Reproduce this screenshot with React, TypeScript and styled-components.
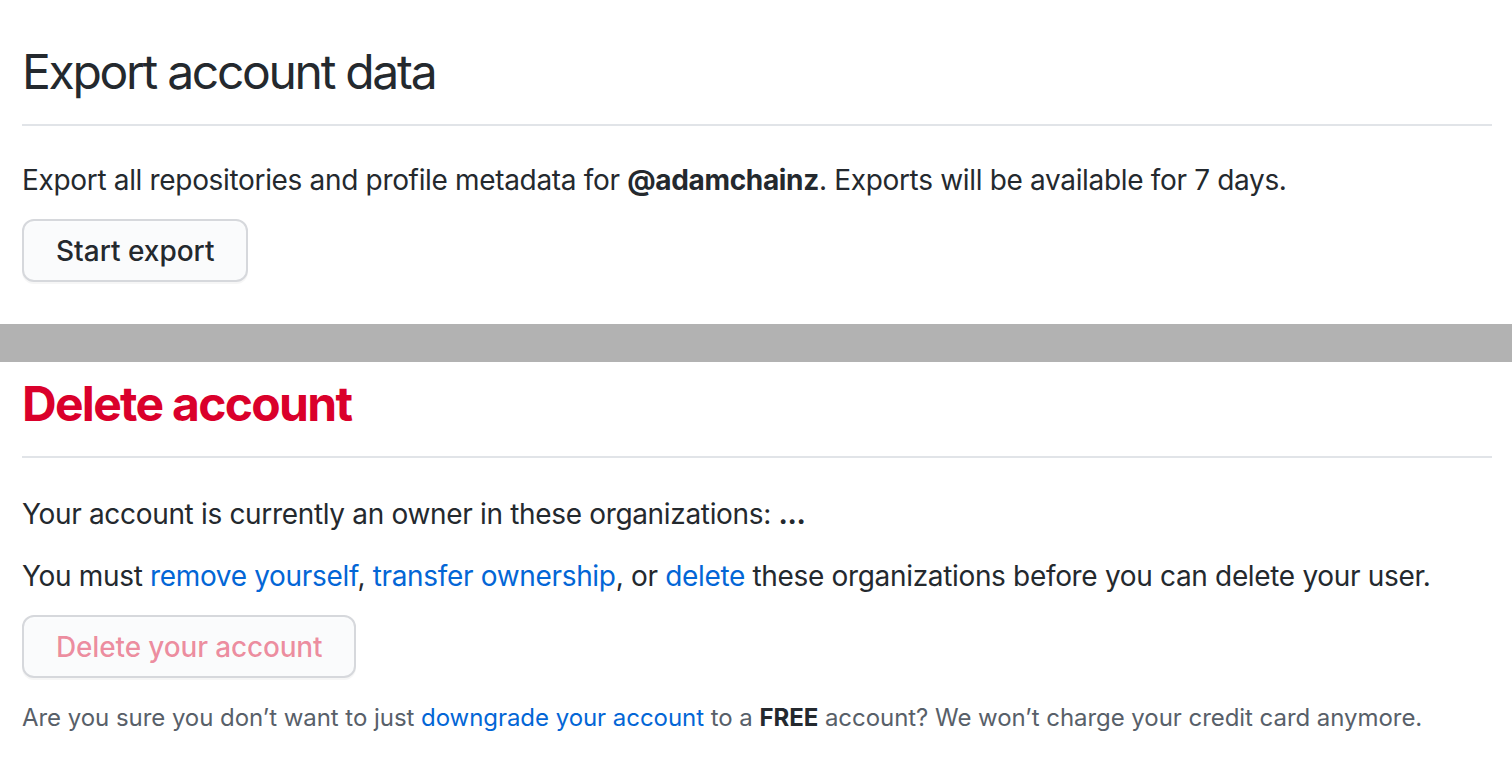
import React from "react";
import styled, { createGlobalStyle } from "styled-components";

const Global = createGlobalStyle`
  html, body { margin: 0; padding: 0; background: #ffffff; }
  body {
    font-family: Inter, "Noto Sans", "Liberation Sans", sans-serif;
    color: #24292e;
    -webkit-font-smoothing: antialiased;
  }
`;

const Page = styled.div`
  display: flex;
  flex-direction: column;
  width: 1512px;
`;

const Section = styled.section<{ $top: number; $bottom: number }>`
  display: flex;
  flex-direction: column;
  align-items: flex-start;
  padding: ${(p) => p.$top}px 20px ${(p) => p.$bottom}px 22px;
`;

const Subhead = styled.div<{ $after: number }>`
  align-self: stretch;
  padding-bottom: 22px;
  border-bottom: 2px solid #e1e4e8;
  margin-bottom: ${(p) => p.$after}px;
`;

const Heading = styled.h2<{ $danger?: boolean }>`
  margin: 0;
  font-size: 48px;
  line-height: 60px;
  font-weight: ${(p) => (p.$danger ? 700 : 400)};
  letter-spacing: ${(p) => (p.$danger ? "-1.7px" : "-2.3px")};
  color: ${(p) => (p.$danger ? "#da002b" : "#24292e")};
`;

const Para = styled.p<{ $gap: number }>`
  margin: 0 0 ${(p) => p.$gap}px;
  font-size: 28px;
  line-height: 42px;
  letter-spacing: -0.33px;
  color: #24292e;
`;

const Strong = styled.strong`
  font-weight: 700;
  color: #24292e;
`;

const Link = styled.a`
  color: #0366d6;
  text-decoration: none;
`;

const Button = styled.button<{ $danger?: boolean }>`
  display: inline-flex;
  align-items: center;
  height: 63px;
  padding: 0 32px;
  font-family: inherit;
  font-size: 28px;
  font-weight: 500;
  letter-spacing: ${(p) => (p.$danger ? "-0.15px" : "0")};
  color: ${(p) => (p.$danger ? "rgba(218, 0, 43, 0.45)" : "#24292e")};
  background: #fafbfc;
  border: 2px solid #d6d8dc;
  border-radius: 12px;
  box-shadow: 0 2px 0 rgba(27, 31, 35, 0.04), inset 0 2px 0 rgba(255, 255, 255, 0.25);
  cursor: pointer;
`;

const Divider = styled.div`
  height: 38px;
  background: #b2b2b2;
`;

const Note = styled.p`
  margin: 22px 0 0;
  font-size: 24px;
  line-height: 36px;
  letter-spacing: -0.05px;
  color: #586069;
`;

export default function App() {
  return (
    <>
      <Global />
      <Page>
        <Section $top={42} $bottom={42}>
          <Subhead $after={33}>
            <Heading>Export account data</Heading>
          </Subhead>
          <Para $gap={18}>
            Export all repositories and profile metadata for <Strong>@adamchainz</Strong>. Exports will be available for 7 days.
          </Para>
          <Button>Start export</Button>
        </Section>
        <Divider />
        <Section $top={12} $bottom={18}>
          <Subhead $after={35}>
            <Heading $danger>Delete account</Heading>
          </Subhead>
          <Para $gap={20}>
            Your account is currently an owner in these organizations: <Strong>...</Strong>
          </Para>
          <Para $gap={18}>
            You must <Link href="#">remove yourself</Link>, <Link href="#">transfer ownership</Link>, or{" "}
            <Link href="#">delete</Link> these organizations before you can delete your user.
          </Para>
          <Button $danger disabled>Delete your account</Button>
          <Note>
            Are you sure you don’t want to just <Link href="#">downgrade your account</Link> to a <Strong>FREE</Strong> account? We won’t charge your credit card anymore.
          </Note>
        </Section>
      </Page>
    </>
  );
}
